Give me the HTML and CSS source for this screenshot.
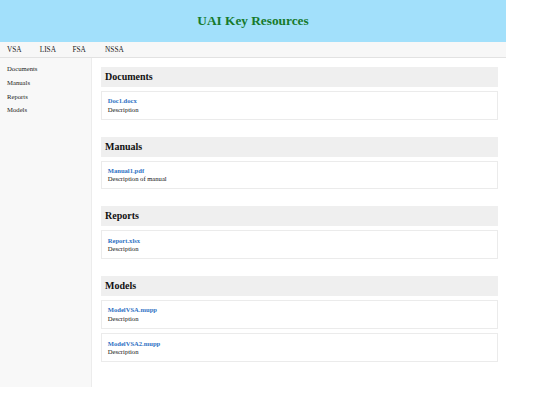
FILE: index.html
```html
<!DOCTYPE html>
<html>
<head>
<meta charset="utf-8">
<link rel="stylesheet" href="styles.css">
</head>
<body>
<div class="page">
  <header class="top">UAI Key Resources</header>
  <nav class="tabs">
    <span class="tab">VSA</span>
    <span class="tab">LISA</span>
    <span class="tab">FSA</span>
    <span class="tab">NSSA</span>
  </nav>
  <div class="layout">
    <aside class="side">
      <div class="side-item">Documents</div>
      <div class="side-item">Manuals</div>
      <div class="side-item">Reports</div>
      <div class="side-item">Models</div>
    </aside>
    <main class="main">
      <section class="sec">
        <h2 class="sec-title">Documents</h2>
        <div class="card"><a class="file">Doc1.docx</a><div class="desc">Description</div></div>
      </section>
      <section class="sec">
        <h2 class="sec-title">Manuals</h2>
        <div class="card"><a class="file">Manual1.pdf</a><div class="desc">Description of manual</div></div>
      </section>
      <section class="sec">
        <h2 class="sec-title">Reports</h2>
        <div class="card"><a class="file">Report.xlsx</a><div class="desc">Description</div></div>
      </section>
      <section class="sec">
        <h2 class="sec-title">Models</h2>
        <div class="card"><a class="file">ModelVSA.mupp</a><div class="desc">Description</div></div>
        <div class="card"><a class="file">ModelVSA2.mupp</a><div class="desc">Description</div></div>
      </section>
    </main>
  </div>
</div>
</body>
</html>
```
FILE: styles.css
```css
html, body {
  margin: 0;
  padding: 0;
  background: #ffffff;
}
body {
  font-family: "Liberation Serif", "Times New Roman", serif;
  color: #111;
}
.page {
  width: 506px;
}
.top {
  height: 42px;
  line-height: 42px;
  background: #a2e0fb;
  color: #167a2c;
  font-weight: bold;
  font-size: 13.3px;
  text-align: center;
}
.tabs {
  display: flex;
  height: 15px;
  align-items: center;
  padding-left: 7px;
  background: #f7f7f7;
  border-bottom: 1px solid #e2e2e2;
  font-size: 7.3px;
  color: #222;
}
.tab {
  width: 32.7px;
  flex: none;
}
.layout {
  display: flex;
}
.side {
  width: 92px;
  flex: none;
  box-sizing: border-box;
  padding: 4.2px 7px 0 7px;
  background: #f8f8f8;
  border-right: 1px solid #ececec;
  font-size: 6.7px;
}
.side-item {
  line-height: 13.7px;
  color: #222;
}
.main {
  flex: 1;
  padding: 9px 8px 8.4px 8.7px;
}
.sec {
  display: flex;
  flex-direction: column;
  margin-bottom: 17px;
}
.sec-title {
  margin: 0 0 4px 0;
  height: 20px;
  line-height: 20px;
  padding-left: 4.3px;
  background: #efefef;
  font-family: "Liberation Serif", "Times New Roman", serif;
  font-size: 10px;
  font-weight: bold;
  color: #111;
}
.card {
  box-sizing: border-box;
  height: 28.7px;
  padding: 5.3px 6px;
  border: 1px solid #ebebeb;
  background: #fff;
  font-size: 6.6px;
  line-height: 8.2px;
}
.card + .card {
  margin-top: 4.6px;
}
.file {
  display: block;
  color: #2f72c4;
  font-weight: bold;
}
.desc {
  color: #111;
}
```
